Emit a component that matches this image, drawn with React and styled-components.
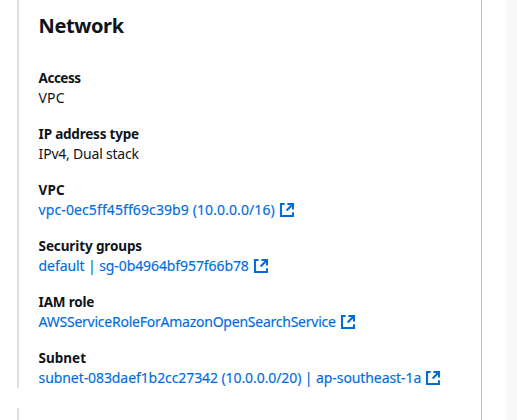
import React from "react";
import styled, { createGlobalStyle } from "styled-components";

const GlobalStyle = createGlobalStyle`
  *, *::before, *::after { box-sizing: border-box; }
  body {
    margin: 0;
    background: #ffffff;
    overflow: hidden;
  }
`;

const Page = styled.div`
  display: flex;
  width: 517px;
  height: 420px;
  overflow: hidden;
  background: #ffffff;
  color: #0f141a;
  font-family: "Noto Sans", "Open Sans", sans-serif;
`;

const Panel = styled.main`
  width: 482px;
  padding-left: 17px;
  border-right: 1px solid #c0c0c7;
`;

const Gutter = styled.div`
  width: 24px;
`;

const PageEdge = styled.aside`
  flex: 1;
  background: #f9f9f9;
`;

const Column = styled.section`
  height: ${({ $height }) => $height}px;
  margin-bottom: 20px;
  padding: 14px 0 0 19.6px;
  border-left: 2px solid #dedee5;
`;

const Heading = styled.h2`
  margin: 0 0 30px;
  font-size: 20px;
  line-height: 24px;
  font-weight: 700;
  letter-spacing: -0.4px;
`;

const Fields = styled.dl`
  display: flex;
  flex-direction: column;
  gap: 16px;
  margin: 0;
`;

const Field = styled.div`
  height: 40px;
  white-space: nowrap;
`;

const Label = styled.dt`
  font-size: 13.5px;
  line-height: 20px;
  font-weight: 700;
  letter-spacing: ${({ $tracking }) => $tracking}px;
`;

const Value = styled.dd`
  margin: 0;
  font-size: 14px;
  line-height: 20px;
  letter-spacing: ${({ $tracking }) => $tracking}px;
`;

const Link = styled.a`
  display: flex;
  align-items: center;
  gap: 4.2px;
  color: #006ce0;
  text-decoration: none;
  -webkit-text-stroke: 0.15px #006ce0;
`;

const LinkText = styled.span`
  flex: none;
`;

const Icon = styled.svg`
  flex: none;
  width: 16px;
  height: 16px;
  fill: none;
  stroke: #006ce0;
  stroke-width: 2.1;
`;

function ExternalIcon() {
  return (
    <Icon viewBox="0 0 16 16" aria-hidden="true">
      <path d="M8.4 2H14v5.6M7.6 8.4 14 2M14 10.3V14H2V2h3.6" />
    </Icon>
  );
}

const fields = [
  { label: "Access", labelTracking: -0.5, value: "VPC", tracking: 0.1 },
  { label: "IP address type", labelTracking: -0.2, value: "IPv4, Dual stack", tracking: -0.21 },
  { label: "VPC", labelTracking: 0.1, value: "vpc-0ec5ff45ff69c39b9 (10.0.0.0/16)", tracking: 0.1, link: true },
  { label: "Security groups", labelTracking: -0.12, value: "default | sg-0b4964bf957f66b78", tracking: -0.09, link: true },
  { label: "IAM role", labelTracking: -0.2, value: "AWSServiceRoleForAmazonOpenSearchService", tracking: -0.24, link: true },
  { label: "Subnet", labelTracking: 0, value: "subnet-083daef1b2cc27342 (10.0.0.0/20) | ap-southeast-1a", tracking: -0.085, link: true },
];

export default function App() {
  return (
    <>
      <GlobalStyle />
      <Page>
        <Panel>
          <Column $height={388}>
            <Heading>Network</Heading>
            <Fields>
              {fields.map((field) => (
                <Field key={field.label}>
                  <Label $tracking={field.labelTracking}>{field.label}</Label>
                  <Value $tracking={field.tracking}>
                    {field.link ? (
                      <Link href="#">
                        <LinkText>{field.value}</LinkText>
                        <ExternalIcon />
                      </Link>
                    ) : (
                      field.value
                    )}
                  </Value>
                </Field>
              ))}
            </Fields>
          </Column>
          <Column $height={40} />
        </Panel>
        <Gutter />
        <PageEdge />
      </Page>
    </>
  );
}
